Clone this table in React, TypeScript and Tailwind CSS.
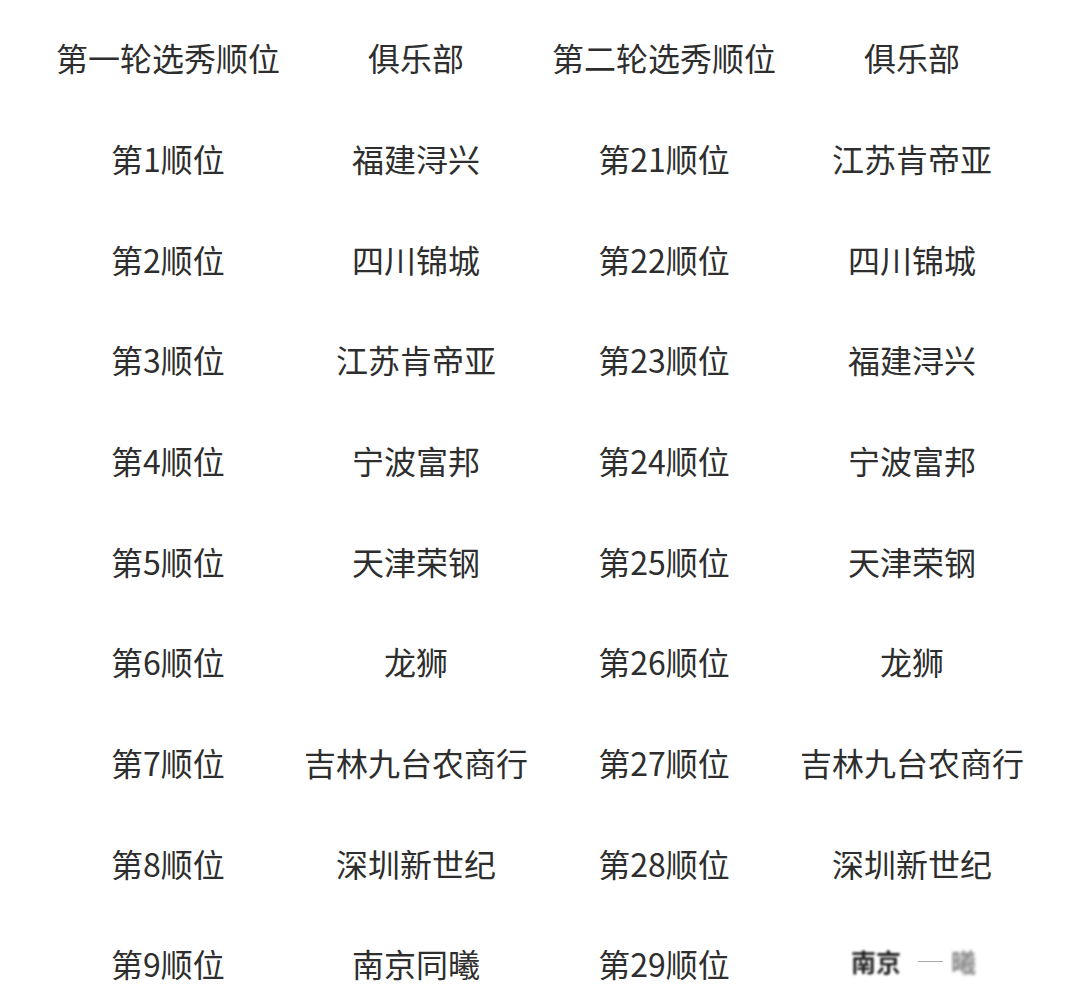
import React from "react";

const rows: [string, string, string, string][] = [
  ["第一轮选秀顺位", "俱乐部", "第二轮选秀顺位", "俱乐部"],
  ["第1顺位", "福建浔兴", "第21顺位", "江苏肯帝亚"],
  ["第2顺位", "四川锦城", "第22顺位", "四川锦城"],
  ["第3顺位", "江苏肯帝亚", "第23顺位", "福建浔兴"],
  ["第4顺位", "宁波富邦", "第24顺位", "宁波富邦"],
  ["第5顺位", "天津荣钢", "第25顺位", "天津荣钢"],
  ["第6顺位", "龙狮", "第26顺位", "龙狮"],
  ["第7顺位", "吉林九台农商行", "第27顺位", "吉林九台农商行"],
  ["第8顺位", "深圳新世纪", "第28顺位", "深圳新世纪"],
  ["第9顺位", "南京同曦", "第29顺位", ""],
];

export default function App() {
  return (
    <div
      className="w-[1080px] h-[992px] bg-white overflow-hidden pt-[7px] pl-[44px] text-[#2e2e2e]"
      style={{ fontFamily: '"Noto Sans CJK SC", "Noto Sans", sans-serif' }}
    >
      <div className="grid grid-cols-[248px_248px_248px_248px]">
        {rows.map((r, i) =>
          r.map((c, j) => (
            <div
              key={`${i}-${j}`}
              className="h-[100.67px] flex items-center justify-center text-[32px] leading-none whitespace-nowrap"
            >
              {i === 9 && j === 3 ? (
                <div className="flex items-center pl-[3px] -translate-y-[2px]">
                  <span className="text-[25px] font-bold blur-[1.2px] text-[#222]">
                    南京
                  </span>
                  <span className="ml-[17px] w-[25px] h-px bg-[#aaa]" />
                  <span className="ml-[8px] text-[25px] font-bold blur-[1.5px] text-[#888]">
                    曦
                  </span>
                </div>
              ) : (
                c
              )}
            </div>
          ))
        )}
      </div>
    </div>
  );
}
